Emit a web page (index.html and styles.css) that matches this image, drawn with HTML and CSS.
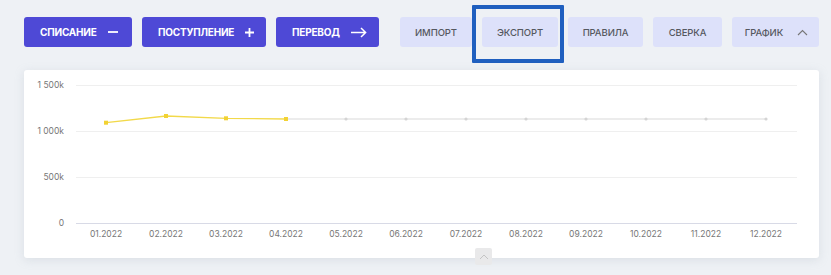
FILE: index.html
```html
<!DOCTYPE html>
<html>
<head>
<meta charset="utf-8">
<title>График</title>
<link rel="stylesheet" href="styles.css">
</head>
<body>
<div class="page">
	<div class="toolbar">
		<div class="group">
			<button class="btn primary">СПИСАНИЕ
				<svg width="10" height="10" viewBox="0 0 10 10"><path d="M0 5h10" stroke="#fff" stroke-width="1.8"/></svg>
			</button>
			<button class="btn primary">ПОСТУПЛЕНИЕ
				<svg width="9" height="9" viewBox="0 0 9 9"><path d="M0 4.5h9M4.5 0v9" stroke="#fff" stroke-width="1.8"/></svg>
			</button>
			<button class="btn primary">ПЕРЕВОД
				<svg width="16" height="11" viewBox="0 0 16 11"><path d="M0 5.5h15M10 1l4.6 4.5L10 10" stroke="#fff" stroke-width="1.5" fill="none"/></svg>
			</button>
		</div>
		<div class="group light-group">
			<button class="btn light">ИМПОРТ</button>
			<button class="btn light export">ЭКСПОРТ<span class="focus"></span></button>
			<button class="btn light">ПРАВИЛА</button>
			<button class="btn light">СВЕРКА</button>
			<button class="btn light">ГРАФИК
				<svg width="11" height="7" viewBox="0 0 11 7"><path d="M1 6l4.5-4.5L10 6" stroke="#777" stroke-width="1.1" fill="none"/></svg>
			</button>
		</div>
	</div>

	<div class="card">
		<svg class="chart" width="795" height="188" viewBox="0 0 795 188">
			<g stroke="#efefef" stroke-width="1">
				<line x1="52" y1="15.5" x2="773" y2="15.5"/>
				<line x1="52" y1="61.5" x2="773" y2="61.5"/>
				<line x1="52" y1="107.5" x2="773" y2="107.5"/>
			</g>
			<line x1="52" y1="153.5" x2="773" y2="153.5" stroke="#d8dae6"/>
			<g class="ylab" text-anchor="end">
				<text x="40" y="18">1 500k</text>
				<text x="40" y="64">1 000k</text>
				<text x="40" y="110">500k</text>
				<text x="40" y="156">0</text>
			</g>
			<g class="xlab" text-anchor="middle">
				<text x="82" y="167">01.2022</text>
				<text x="142" y="167">02.2022</text>
				<text x="202" y="167">03.2022</text>
				<text x="262" y="167">04.2022</text>
				<text x="322" y="167">05.2022</text>
				<text x="382" y="167">06.2022</text>
				<text x="442" y="167">07.2022</text>
				<text x="502" y="167">08.2022</text>
				<text x="562" y="167">09.2022</text>
				<text x="622" y="167">10.2022</text>
				<text x="682" y="167">11.2022</text>
				<text x="742" y="167">12.2022</text>
			</g>
			<polyline points="262,49 742,49" stroke="#e6e6e6" stroke-width="1.5" fill="none"/>
			<g fill="#d4d4d4">
				<circle cx="322" cy="49" r="1.6"/>
				<circle cx="382" cy="49" r="1.6"/>
				<circle cx="442" cy="49" r="1.6"/>
				<circle cx="502" cy="49" r="1.6"/>
				<circle cx="562" cy="49" r="1.6"/>
				<circle cx="622" cy="49" r="1.6"/>
				<circle cx="682" cy="49" r="1.6"/>
				<circle cx="742" cy="49" r="1.6"/>
			</g>
			<polyline points="82,52.7 142,46 202,48.3 262,49" stroke="#f2d94a" stroke-width="1.3" fill="none"/>
			<g fill="#f2d233">
				<rect x="80" y="50.7" width="4" height="4"/>
				<rect x="140" y="44" width="4" height="4"/>
				<rect x="200" y="46.3" width="4" height="4"/>
				<rect x="260" y="47" width="4" height="4"/>
			</g>
		</svg>
		<div class="collapse">
			<svg width="10" height="6" viewBox="0 0 10 6"><path d="M1 5l4-4 4 4" stroke="#c4c4c4" stroke-width="1" fill="none"/></svg>
		</div>
	</div>
</div>
</body>
</html>
```

FILE: styles.css
```css
*{margin:0; padding:0; box-sizing:border-box;}
body{background:#eef1f5; font-family:Inter, "Noto Sans", sans-serif; width:831px; height:275px; overflow:hidden;}

.page{padding:17px 0 0 24px;}

.toolbar{display:flex; gap:21px; height:30px;}
.toolbar .group{display:flex; gap:10px;}

.btn{display:flex; align-items:center; height:30px; border:none; border-radius:3px; font-family:Inter, "Noto Sans", sans-serif; cursor:pointer; white-space:nowrap;}
.btn svg{flex-shrink:0;}
.btn.primary{background:#4e49d6; color:#fff; font-size:10px; font-weight:700; letter-spacing:-0.2px; padding:0 0 0 16px; gap:11px;}
.btn.primary:nth-child(1){width:108px;}
.btn.primary:nth-child(2){width:124px;}
.btn.primary:nth-child(3){width:103px;}

.btn.light{background:#dde1fa; color:#55585f; font-size:9.5px; font-weight:500; letter-spacing:-0.1px; justify-content:center;}
.light-group .btn:nth-child(1){width:72px;}
.light-group .btn:nth-child(2){width:76px;}
.light-group .btn:nth-child(3){width:75px;}
.light-group .btn:nth-child(4){width:69px;}
.light-group .btn:nth-child(5){width:87px; gap:14px; padding-left:2px;}

.btn.export{position:relative;}
.btn.export .focus{position:absolute; left:-10px; top:-12px; width:92px; height:58px; border:4px solid #1f5fbf; border-radius:1px;}

.card{position:relative; width:795px; height:188px; margin-top:23px; background:#fff; border-radius:3px; box-shadow:0 2px 10px rgba(160,170,185,.25);}
.chart{display:block;}
.chart .ylab text{font-size:8.5px; fill:#777; font-family:Inter, sans-serif;}
.chart .xlab text{font-size:8.5px; fill:#777; font-family:Inter, sans-serif;}

.collapse{position:absolute; left:451px; top:178px; width:17px; height:17px; background:#e9e9ea; border-radius:2px; display:flex; align-items:center; justify-content:center;}
```
